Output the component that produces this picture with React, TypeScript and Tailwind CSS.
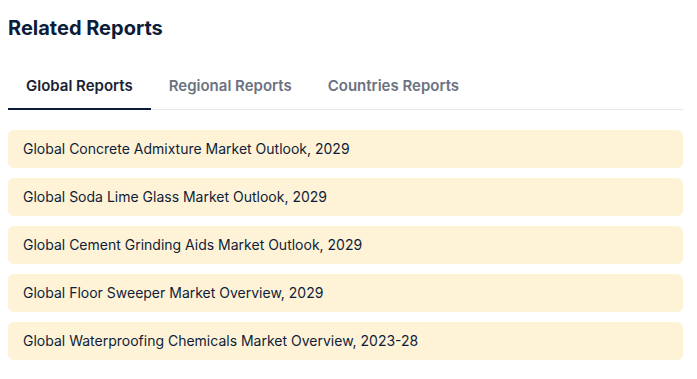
export default function App() {
  const reports = [
    "Global Concrete Admixture Market Outlook, 2029",
    "Global Soda Lime Glass Market Outlook, 2029",
    "Global Cement Grinding Aids Market Outlook, 2029",
    "Global Floor Sweeper Market Overview, 2029",
    "Global Waterproofing Chemicals Market Overview, 2023-28",
  ];
  const tabs = ["Global Reports", "Regional Reports", "Countries Reports"];
  return (
    <div className="w-[697px] h-[379px] bg-white px-2 pt-[14px] pr-[14px]" style={{ fontFamily: "Inter, 'Noto Sans', sans-serif" }}>
      <h2 className="text-[20px] leading-7 font-bold text-[#0b1d3a]">Related Reports</h2>
      <div className="mt-[22px] flex border-b border-[#e5e7eb]">
        {tabs.map((t, i) => (
          <div
            key={t}
            className={
              i === 0
                ? "px-[18px] pt-[11px] pb-[11px] text-[15px] leading-[22px] font-semibold border-b-2 -mb-px border-[#0b1d3a] text-[#1a2233]"
                : "px-[18px] pt-[11px] pb-[11px] text-[15px] leading-[22px] font-semibold border-b-2 -mb-px border-transparent text-[#6b7280]"
            }
          >
            {t}
          </div>
        ))}
      </div>
      <div className="mt-5 flex flex-col gap-[10px]">
        {reports.map((r) => (
          <div key={r} className="bg-[#fef3d7] rounded-md px-[15px] py-[9px] text-[14px] leading-5 text-[#0f1d3a]">
            {r}
          </div>
        ))}
      </div>
    </div>
  );
}
